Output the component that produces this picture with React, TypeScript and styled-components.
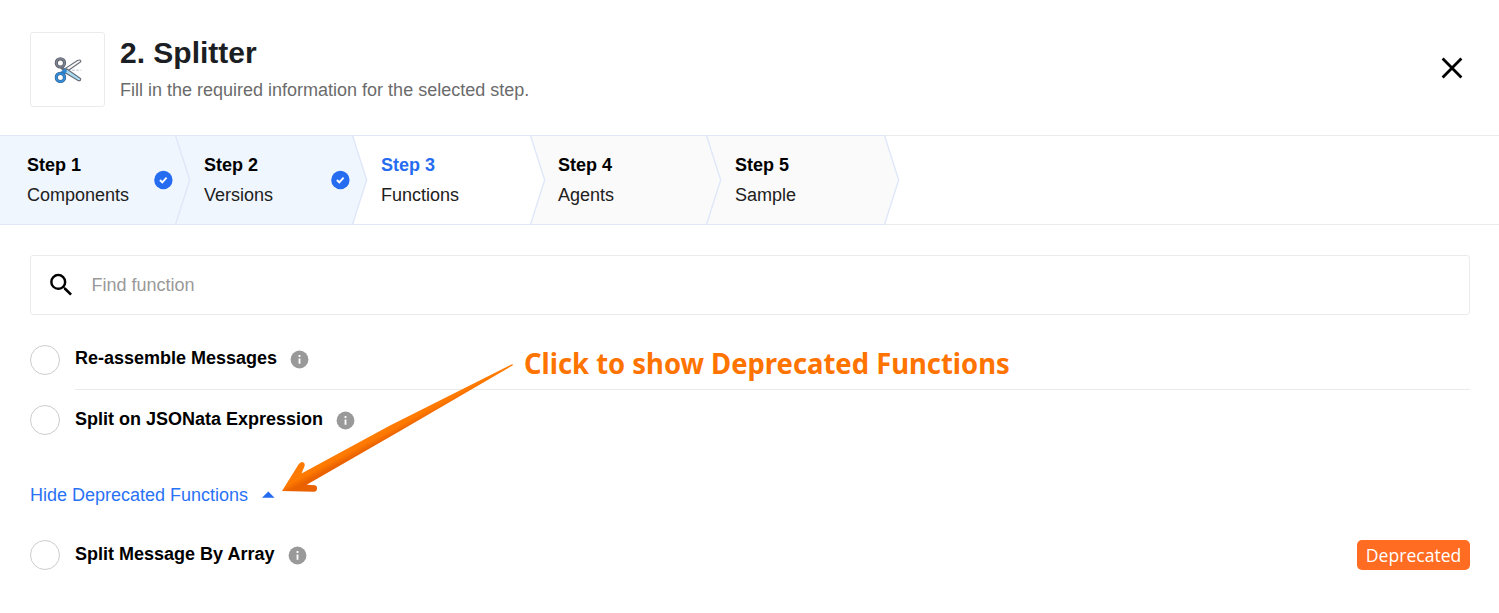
import React from "react";
import styled, { createGlobalStyle } from "styled-components";

const Global = createGlobalStyle`
  * { box-sizing: border-box; }
  body {
    margin: 0;
    background: #fff;
    color: #000;
    font-family: "Liberation Sans", Arial, sans-serif;
    font-size: 18px;
    overflow: hidden;
  }
`;

const Page = styled.main`
  position: relative;
  height: 613px;
  overflow: hidden;
`;

const Header = styled.header`
  display: flex;
  height: 135px;
  padding: 32px 35px 0 30px;
`;

const Logo = styled.div`
  display: flex;
  width: 75px;
  height: 75px;
  border: 1px solid #ebebeb;
  border-radius: 3px;
`;

const Heading = styled.div`
  flex: 1;
  padding: 3px 0 0 15px;
`;

const Title = styled.h1`
  margin: 0;
  font-size: 30px;
  line-height: 36px;
  color: #1b1e22;
`;

const Subtitle = styled.p`
  margin: 8px 0 0;
  line-height: 22px;
  color: #6b6b6b;
`;

const CloseButton = styled.button`
  width: 24px;
  height: 24px;
  margin-top: 24px;
  padding: 0;
  border: 0;
  background: none;
  svg { display: block; }
`;

const Steps = styled.nav`
  display: flex;
  height: 90px;
  border-top: 1px solid #ebebeb;
  border-bottom: 1px solid #ebebeb;
`;

const fills = { done: "#eff6fe", current: "#ffffff", idle: "#fafafa" };
type StepState = keyof typeof fills;

const StepBox = styled.div<{ $state: StepState; $order: number }>`
  position: relative;
  z-index: ${(p) => p.$order};
  display: flex;
  justify-content: space-between;
  width: 177px;
  height: 90px;
  margin-top: -1px;
  padding: 18px 4px 0 27px;
  border-top: 1px solid #dfe7f8;
  border-bottom: 1px solid #dfe7f8;
  background: ${(p) => fills[p.$state]};
`;

const StepLabel = styled.div<{ $active: boolean }>`
  line-height: 22px;
  b {
    display: block;
    margin-bottom: 8px;
    color: ${(p) => (p.$active ? "#256cf0" : "#000")};
  }
  span { color: #202020; }
`;

const Tip = styled.svg<{ $shift: number }>`
  position: absolute;
  top: -1px;
  left: ${(p) => 175 + p.$shift}px;
`;

const DoneMark = styled.svg`
  position: relative;
  z-index: 1;
  margin-top: 16px;
`;

const Content = styled.section`
  padding: 30px 29px 0 30px;
`;

const Search = styled.label`
  display: flex;
  align-items: center;
  height: 60px;
  margin-bottom: 15px;
  padding-left: 15px;
  border: 1px solid #ebebeb;
  border-radius: 3px;
`;

const SearchInput = styled.input`
  flex: 1;
  margin-left: 15.5px;
  padding: 0;
  border: 0;
  outline: 0;
  font: inherit;
  line-height: 22px;
  &::placeholder { color: #999; opacity: 1; }
`;

const Row = styled.div`
  display: flex;
  height: 60px;
  padding-top: 15px;
`;

const Radio = styled.span`
  flex: none;
  width: 30px;
  height: 30px;
  border: 1px solid #ccc;
  border-radius: 50%;
`;

const RowBody = styled.div<{ $divider?: boolean; $drop: number }>`
  display: flex;
  flex: 1;
  height: 45px;
  margin-left: 15px;
  padding-top: ${(p) => p.$drop}px;
  border-bottom: ${(p) => (p.$divider ? "1px solid #ebebeb" : "0")};
`;

const Name = styled.b`
  line-height: 22px;
`;

const InfoMark = styled.svg`
  flex: none;
  margin: 3px 0 0 13.3px;
`;

const Badge = styled.span`
  display: flex;
  justify-content: center;
  width: 113px;
  height: 30px;
  margin: -3px 0 0 auto;
  border-radius: 5px;
  background: #ff6c22;
  color: #fff;
  font-family: "Open Sans", sans-serif;
  font-size: 19px;
  line-height: 30px;
`;

const BadgeText = styled.span`
  transform: scaleX(0.925);
`;

const Toggle = styled.button`
  display: flex;
  align-items: center;
  gap: 14px;
  height: 22px;
  margin: 34px 0 19px;
  padding: 0;
  border: 0;
  background: none;
  color: #2a72f5;
  font: inherit;
  svg { margin-top: -2px; }
`;

const Note = styled.div`
  position: absolute;
  top: 343px;
  left: 524px;
  color: #ff7300;
  font: 700 28.5px/40px "Noto Sans", sans-serif;
  white-space: nowrap;
  transform: scaleX(0.9615);
  transform-origin: 0 50%;
`;

const Arrow = styled.svg`
  position: absolute;
  top: 355px;
  left: 275px;
`;

const Check = () => (
  <DoneMark width="20" height="20" viewBox="0 0 20 20">
    <circle cx="10.4" cy="10" r="9.2" fill="#256cf0" />
    <path d="M6.9 10l2.4 2.3 4.3-4.6" fill="none" stroke="#fff" strokeWidth="1.9" />
  </DoneMark>
);

const Info = () => (
  <InfoMark width="20" height="20" viewBox="0 0 20 20">
    <circle cx="9.5" cy="9.5" r="8.9" fill="#999" />
    <path d="M9.5 5.1v1.9M9.5 8.6v5.2" stroke="#fff" strokeWidth="1.8" />
  </InfoMark>
);

const Scissors = () => (
  <svg width="73" height="73" viewBox="31 33 73 73">
    <path d="M72 70.2h9.5" stroke="#c3c8d0" strokeWidth="1" strokeDasharray="3 1.2" />
    <path d="M63.5 69.6L77.4 60.6q3.4-1.6 3.4 1L66.5 71.8z" fill="#f5f5f5" stroke="#676c76" strokeWidth="1.1" />
    <path d="M66.5 68.8L80.6 78.6q.6 2.4-2.2 2L64 72z" fill="#a9dcf0" stroke="#676c76" strokeWidth="1.1" />
    <path d="M62.4 66l4 3.8-2.5 2.2-4.4-4.6z" fill="#6c717c" />
    <circle cx="60.4" cy="62.9" r="4.1" fill="#fff" stroke="#5d626e" strokeWidth="3.2" />
    <circle cx="60.4" cy="62.9" r="4.1" fill="none" stroke="#7e8491" strokeWidth="1.5" />
    <path d="M58.8 73.6l6.2-5.3 2 2.6-3.2 6z" fill="#2f86d2" />
    <circle cx="60.4" cy="77.4" r="4.1" fill="#fff" stroke="#345f89" strokeWidth="3.2" />
    <circle cx="60.4" cy="77.4" r="4.1" fill="none" stroke="#348bd8" strokeWidth="2.2" />
  </svg>
);

const steps: { name: string; state: StepState; shift: number }[] = [
  { name: "Components", state: "done", shift: 0 },
  { name: "Versions", state: "done", shift: 0 },
  { name: "Functions", state: "current", shift: 1 },
  { name: "Agents", state: "idle", shift: 0 },
  { name: "Sample", state: "idle", shift: 1 },
];

type FunctionRowProps = {
  name: string;
  drop: number;
  divider?: boolean;
  deprecated?: boolean;
};

const FunctionRow = ({ name, drop, divider, deprecated }: FunctionRowProps) => (
  <Row>
    <Radio role="radio" aria-checked={false} aria-label={name} />
    <RowBody $divider={divider} $drop={drop}>
      <Name>{name}</Name>
      <Info />
      {deprecated && <Badge><BadgeText>Deprecated</BadgeText></Badge>}
    </RowBody>
  </Row>
);

export default function App() {
  return (
    <Page>
      <Global />
      <Header>
        <Logo><Scissors /></Logo>
        <Heading>
          <Title>2. Splitter</Title>
          <Subtitle>Fill in the required information for the selected step.</Subtitle>
        </Heading>
        <CloseButton aria-label="Close">
          <svg width="24" height="24" viewBox="0 0 24 24">
            <path d="M2.6 2.6l18.8 18.8M21.4 2.6L2.6 21.4" stroke="#000" strokeWidth="2.8" />
          </svg>
        </CloseButton>
      </Header>
      <Steps>
        {steps.map((s, i) => (
          <StepBox key={s.name} $state={s.state} $order={steps.length - i}>
            <StepLabel $active={s.state === "current"}>
              <b>Step {i + 1}</b>
              <span>{s.name}</span>
            </StepLabel>
            <Tip $shift={s.shift} width="17" height="90" viewBox="0 0 17 90">
              <path d="M0 1H.5L14.5 45 .5 89H0z" fill={fills[s.state]} />
              <path d="M.5 .5L14.7 45 .5 89.5" fill="none" stroke="#dfe7f8" strokeWidth="1.4" />
            </Tip>
            {s.state === "done" && <Check />}
          </StepBox>
        ))}
      </Steps>
      <Content>
        <Search>
          <svg width="30" height="30" viewBox="-.3 0 24 24">
            <path d="M15.5 14h-.79l-.28-.27A6.47 6.47 0 0 0 16 9.5 6.5 6.5 0 1 0 9.5 16c1.61 0 3.09-.59 4.23-1.57l.27.28v.79l5 4.99L20.49 19l-4.99-5zm-6 0C7.01 14 5 11.99 5 9.5S7.01 5 9.5 5 14 7.01 14 9.5 11.99 14 9.5 14z" />
          </svg>
          <SearchInput placeholder="Find function" />
        </Search>
        <FunctionRow name="Re-assemble Messages" drop={2} divider />
        <FunctionRow name="Split on JSONata Expression" drop={3} />
        <Toggle>
          Hide Deprecated Functions
          <svg width="13" height="7" viewBox="0 0 13 7">
            <path d="M0 6.7L6.3 .5l6.3 6.2z" fill="#256cf0" />
          </svg>
        </Toggle>
        <FunctionRow name="Split Message By Array" drop={3} deprecated />
      </Content>
      <Arrow width="242" height="142" viewBox="275 355 242 142">
        <defs>
          <linearGradient id="shaft" gradientUnits="userSpaceOnUse" x1="397" y1="420" x2="403.4" y2="432">
            <stop offset="0.42" stopColor="#ff7a00" />
            <stop offset="0.85" stopColor="#ea6200" />
          </linearGradient>
        </defs>
        <path
          d="M282 491L298.500 464.500Q301 460.800 303.600 462.500Q305.500 464 304.200 467L301.500 473.500L390 425.500L512 364.200Q513.700 364.500 512.500 365.500L400 431L306.700 484.700L315 485.200Q317.500 486 317 489Q316.600 491.700 314 491.700Z"
          fill="url(#shaft)"
        />
      </Arrow>
      <Note>Click to show Deprecated Functions</Note>
    </Page>
  );
}
